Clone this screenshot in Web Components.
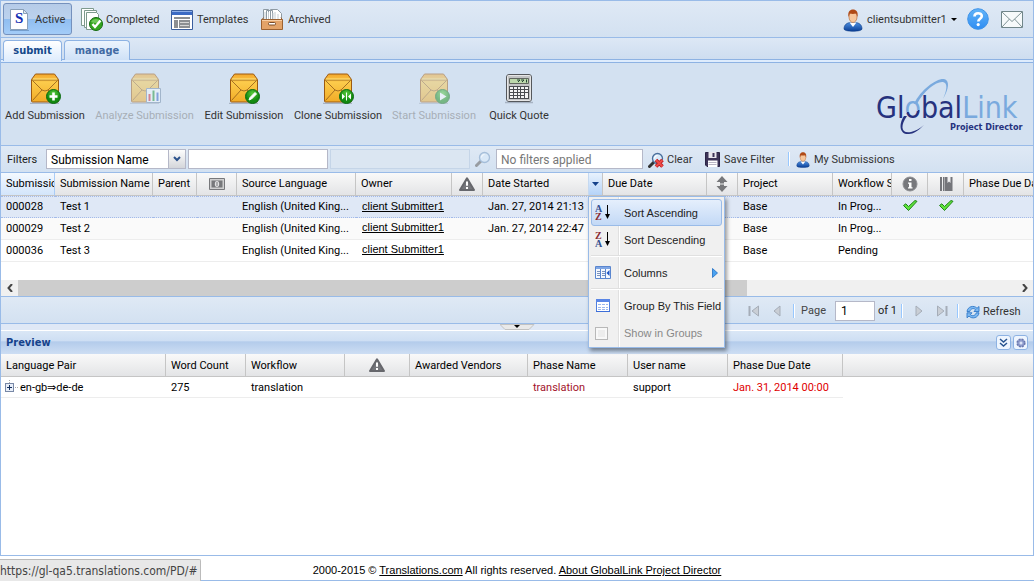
<!DOCTYPE html>
<html lang="en">
<head>
<meta charset="utf-8">
<meta name="viewport" content="width=device-width, initial-scale=1">
<title>GlobalLink Project Director</title>
<style>
:root{
  --ui:Roboto,Tahoma,sans-serif;
  --bold:"DejaVu Sans Condensed",Tahoma,sans-serif;
  --alt:"Liberation Sans",Arial,sans-serif;
  --line:#99bbe8;
}
*{box-sizing:border-box}
body{margin:0;background:#fff;font:11px/14px var(--ui);color:#000}
</style>
</head>
<body>
<pd-app></pd-app>
<script>
const BASE = '*{box-sizing:border-box}button,input,select{font:inherit;color:inherit;margin:0}button{cursor:pointer;background:none;border:0;padding:0}';

const envelope = `<path d="M1 31.500h29" stroke="#8b95a5" stroke-width="1.500" opacity=".6"/><path d="M2.500 7.500 6.500 2h19l4 5.500V29a1 1 0 0 1-1 1h-25a1 1 0 0 1-1-1z" fill="url(#env)" stroke="#9c5a12"/><path d="M3 8h26M3.500 8.500 13 18l3 1 3-1 9.500-9.500M3.500 28.500 13 18M28.500 28.500 19 18" fill="none" stroke="#8f5a1a" stroke-width=".8"/><path d="M4 7h24" stroke="#ffe37c"/>`;
const envDefs = `<defs><linearGradient id="env" x2="0" y2="1"><stop offset="0" stop-color="#f3a72c"/><stop offset=".3" stop-color="#fccb4b"/><stop offset="1" stop-color="#f2ab26"/></linearGradient><radialGradient id="grn" cy=".3"><stop offset="0" stop-color="#5ccb3d"/><stop offset="1" stop-color="#128a10"/></radialGradient></defs>`;
const ball = `<circle cx="24.500" cy="24.500" r="7" fill="url(#grn)" stroke="#0d6b12"/>`;
const person = `<defs><linearGradient id="p" x2="0" y2="1"><stop offset="0" stop-color="#4d8fe0"/><stop offset="1" stop-color="#0b3f96"/></linearGradient></defs><path d="M1 20c0-4.500 3-6 6-6.500h6c3 .5 6 2 6 6.500 0 3-18 3-18 0z" fill="url(#p)" stroke="#0a3a86" stroke-width=".6"/><path d="M6.500 13.500 10 18l3.500-4.500z" fill="#fff"/><ellipse cx="10" cy="8" rx="4" ry="5.500" fill="#f7c79c" stroke="#b4622c" stroke-width=".6"/><path d="M5.500 8C4.500 2.500 7 .5 10 .5s5.500 2 4.500 7.500c-.8-2-1-3-1.500-3.500-2 .5-4.500.5-6 0-.5.5-1 2-1.500 3.500z" fill="#b04a16"/>`;
const lens = `<path d="M1.500 14.500 6 10" stroke="#777" stroke-width="3" stroke-linecap="round"/><circle cx="9.500" cy="6.500" r="5" fill="#d9eafa" stroke="#8aa9cc" stroke-width="1.300"/><path d="M6.500 6.500a3 3 0 0 1 3-3" stroke="#fff" stroke-width="1.200" fill="none"/>`;
const ICONS = {
  active:[24,24,`<path d="M3 22.500h19" stroke="#4d74a3" opacity=".5"/><path d="M3.500 1.500h13l4 4v16h-17z" fill="#fff" stroke="#8aa0b8"/><path d="M16.500 1.500v4h4z" fill="#dfe8f2" stroke="#8aa0b8"/><text x="8" y="15" font-family="Liberation Serif,serif" font-weight="700" font-size="15" fill="#1430b4">S</text>`],
  completed:[24,24,`<g fill="#fff" stroke="#7e9a8e"><path d="M1.500.5h12v17h-12z"/><path d="M4.500 2.500h12v17h-12z"/><path d="M6.500 4.500h10l2 2v15h-12z"/></g><circle cx="16" cy="16" r="6.500" fill="#33a51e" stroke="#146a10"/><path d="M11 14a5.500 5 0 0 1 10 0q-5 2-10 0" fill="#86d66f" opacity=".7"/><path d="m12.500 16 2.500 3 5.500-6.500" fill="none" stroke="#fff" stroke-width="2.400"/>`],
  templates:[24,24,`<path d="M1.500 2.500h21v19h-21z" fill="#fff" stroke="#3b5f9e"/><path d="M2 3h20v4H2z" fill="#3c6bc4"/><path d="M2 3.500h20" stroke="#8fb0e8"/><path d="M4 9h16v2H4zM4 12h4v8H4zM9 12h11v8H9z" fill="#8c8f93"/><path d="M10 14.500h9M10 17.500h9" stroke="#d6d6d6"/>`],
  archived:[24,24,`<path d="M3.500 13V1.500h5V13M6.500 13V2.500h6V13M10.500 13V1.500h7l4 4V13" fill="#fff" stroke="#8e9aa3"/><path d="M5 4v8M8.500 4v8M13 5v7M15 4v8M18 6v6" stroke="#c4ccd2"/><path d="m1.500 12.500 2-3M22.500 12.500l-1.500-3" stroke="#9c6231"/><path d="M1.500 11.500h21v10h-21z" fill="#e3a368" stroke="#9c6231"/><path d="M2 12.500h20" stroke="#f7cda2"/><rect x="8.500" y="14.500" width="7" height="2.500" rx="1" fill="#fff" stroke="#7a4c27"/>`],
  person:[20,23,person],
  help:[22,22,`<defs><linearGradient id="h" x2="0" y2="1"><stop offset="0" stop-color="#62b4f8"/><stop offset="1" stop-color="#2f8df2"/></linearGradient></defs><circle cx="11" cy="11" r="10.300" fill="url(#h)" stroke="#3f93e8"/><path d="M7.500 8.500c0-4.500 7.300-4.200 7.300-.4 0 2.700-3.500 2.600-3.500 5.400" fill="none" stroke="#fff" stroke-width="2.600"/><circle cx="11.200" cy="16.600" r="1.600" fill="#fff"/>`],
  mail:[22,17,`<path d="M.5.500h21v16H.5z" fill="#f6fafb" stroke="#70868a"/><path d="m1 1 10 9.500L21 1M1 16l7.500-8M21 16l-7.500-8" fill="none" stroke="#7f9396"/>`],
  add:[32,32,envDefs+envelope+ball+`<path d="M24.500 20.500v8M20.500 24.500h8" stroke="#fff" stroke-width="2.600"/>`],
  analyze:[32,32,envDefs+envelope+`<path d="M17.500 16.500h14v14h-14z" fill="#f5faff" stroke="#6f87a3"/><path d="M20.500 22v7" stroke="#d21f2c" stroke-width="2"/><path d="M24.500 18.500V29" stroke="#17912c" stroke-width="2"/><path d="M28.500 20.500V29" stroke="#2c5ec4" stroke-width="2"/>`],
  edit:[32,32,envDefs+envelope+ball+`<path d="m21 28 1-2.500 5-5 1.500 1.500-5 5z" fill="#fff" stroke="#fff"/>`],
  clone:[32,32,envDefs+envelope+ball+`<path d="M20 21.500v6l3-3zM29 21.500v6l-3-3z" fill="#fff"/><path d="M24.500 20.500v8" stroke="#fff" stroke-width="1"/>`],
  start:[32,32,envDefs+envelope+ball+`<path d="m22 20.500 6.500 4-6.500 4z" fill="#fff"/>`],
  calc:[32,32,`<path d="M2 30.500h28" stroke="#8b95a5" stroke-width="1.500" opacity=".6"/><rect x="3.500" y="2.500" width="25" height="27" rx="2.500" fill="#c3c4c5" stroke="#55585c"/><rect x="4.500" y="3.500" width="23" height="25" rx="1" fill="none" stroke="#e6e6e6"/><path d="M6.500 6.500h19v5h-19z" fill="#bcd8ab" stroke="#61665f"/><path d="M14 8h3l-2 2M18 8h3l-2 2M23.500 7.500v3" fill="none" stroke="#243"/><path d="M6 14h20v13H6z" fill="#4a4c50"/><g fill="#f4f4f4"><path d="M7 15h3v2H7zM11 15h3v2h-3zM15 15h2v2h-2zM18 15h3v2h-3zM22 15h3v2h-3zM7 18h3v2H7zM11 18h3v2h-3zM15 18h2v2h-2zM18 18h3v2h-3zM22 18h3v2h-3zM7 21h3v2H7zM11 21h3v2h-3zM15 21h2v2h-2zM18 21h3v2h-3zM22 21h3v5h-3zM7 24h3v2H7zM11 24h3v2h-3zM15 24h2v2h-2zM18 24h3v2h-3z"/></g>`],
  lens:[16,16,`<g opacity=".65">${lens}</g>`],
  clear:[16,16,lens.replace('#777','#333').replace('#8aa9cc','#4a6f9c')+`<path d="m8 8 6.500 6.500m0-6.500L8 14.500" stroke="#b81c1f" stroke-width="3.600"/><path d="m8 8 6.500 6.500m0-6.500L8 14.500" stroke="#f04a48" stroke-width="1.800"/>`],
  save:[16,16,`<path d="M.5.500h14v14H2L.5 13z" fill="#3c3357" stroke="#2b2446"/><path d="M3.500 0h8v6h-8z" fill="#e8e6ee"/><path d="M8.500 1v4" stroke="#3c3357" stroke-width="2"/><path d="M3 8.500h9.500V15H3z" fill="#fff"/><path d="M3.500 10.500h8M3.500 12.500h8" stroke="#b9b6c4"/>`],
  money:[16,12,`<path d="M.5.500h15v11H.5z" fill="#cfcfd0" stroke="#77787b"/><path d="M2.500 2.500h11v7h-11z" fill="#77787b"/><ellipse cx="8" cy="6" rx="2.200" ry="3" fill="#e2e2e3"/><path d="M8 4v4" stroke="#77787b"/>`],
  warn:[16,14,`<path d="M8 1.300 15 13H1z" fill="#75767b" stroke="#66676c" stroke-width="2" stroke-linejoin="round"/><path d="M8 4.500v4.300" stroke="#fff" stroke-width="2"/><path d="M8 10v2" stroke="#fff" stroke-width="2"/>`],
  updown:[12,16,`<path d="M6 0 11.500 6H8v1.500H4V6H.5zM6 16l5.500-6H8V8.500H4V10H.5z" fill="#77787b"/>`],
  info:[16,16,`<circle cx="8" cy="8" r="7" fill="#77787c" stroke="#8d8e92"/><path d="M7 3h2.500v2H7zM6 6.500h3.500v4.800h1v1.200H6v-1.200h1V7.700H6z" fill="#fff"/>`],
  book:[14,16,`<path d="M1 1h2v14H1zM4 1h9.500v14H4z" fill="#74757a"/><path d="M5.500 1v14" stroke="#a9aaad"/><path d="M8.500 1h3v6L10 5.500 8.500 7z" fill="#f0f0f1"/>`],
  check:[16,16,`<path d="m1.500 6.500 2.300-1.700 2.700 2.700L13 1.500l2 .8-8.500 9.200z" fill="#5fe23c" stroke="#1e8416" stroke-linejoin="round"/>`],
  down:[7,5,`<path d="M0 0h7L3.500 4z" fill="#15428b"/>`],
  caret:[6,4,`<path d="M0 0h6L3 3z" fill="#000"/>`],
  chevron:[8,6,`<path d="M1 1 4 4l3-3" fill="none" stroke="#2c528c" stroke-width="2"/>`],
  az:[16,20,`<g font-family="Liberation Serif,serif" font-weight="700" font-size="10"><text x="0" y="9" fill="#35508f">A</text><text x="0" y="17" fill="#8a2c33">Z</text></g><path d="M12.500 2v13" stroke="#000"/><path d="M10 11h5l-2.500 5z"/>`],
  za:[16,20,`<g font-family="Liberation Serif,serif" font-weight="700" font-size="10"><text x="0" y="9" fill="#8a2c33">Z</text><text x="0" y="17" fill="#35508f">A</text></g><path d="M12.500 2v13" stroke="#000"/><path d="M10 11h5l-2.500 5z"/>`],
  columns:[16,16,`<path d="M.5 1.500h15v12H.5z" fill="#f4f8ff" stroke="#5a86cf"/><path d="M1 2h14v2H1z" fill="#7fa6e4"/><path d="M5.500 4v9M10.500 4v9" stroke="#5a86cf"/><path d="M2 6.500h3M2 8.500h3M2 10.500h3M7 6.500h3M7 8.500h3M7 10.500h3" stroke="#7d93bb"/><path d="M14.500 5v6l-3-3z" fill="#1d55c4"/>`],
  group:[16,16,`<path d="M1.500 1.500h13v12h-13z" fill="#fff" stroke="#4f7fe0"/><path d="M1 1h14v3H1z" fill="#5a86e6"/><path d="M3 6.500h10M3 9.500h10M3 11.500h10" stroke="#9bb7ee" stroke-dasharray="3 1"/><path d="M1 13.500h14" stroke="#3d6ed8"/>`],
  right:[6,10,`<path d="m.5.500 5 4.500-5 4.500z" fill="#4aa2f0" stroke="#1f6fc4" stroke-width=".8"/>`],
  first:[12,12,`<path d="M1.500 1v10" stroke="#a5adb8" stroke-width="2"/><path d="M10.500 1v10L4 6z" fill="#c9ced5" stroke="#a5adb8"/>`],
  prev:[8,12,`<path d="M7 1v10L1 6z" fill="#c9ced5" stroke="#a5adb8"/>`],
  next:[8,12,`<path d="M1 1v10l6-5z" fill="#c9ced5" stroke="#a5adb8"/>`],
  last:[12,12,`<path d="M10.500 1v10" stroke="#a5adb8" stroke-width="2"/><path d="M1.500 1v10L8 6z" fill="#c9ced5" stroke="#a5adb8"/>`],
  refresh:[16,16,`<path d="M2 7.500c.5-5 7-6.800 10-3.200L14 2.500v5H9l1.700-1.800C8.500 3.500 5.500 4.800 4.800 7.500z" fill="#7db9f2" stroke="#2f78c8" stroke-width=".9"/><path d="M14 8.800c-.5 5-7 6.800-10 3.200L2 13.800v-5h5l-1.700 1.800c2.200 2.200 5.200.9 5.900-1.800z" fill="#7db9f2" stroke="#2f78c8" stroke-width=".9"/>`],
  plus:[14,18,`<path d="M4.500 1v4M10 8.500h3" stroke="#aaa" stroke-dasharray="1 1"/><rect x=".5" y="4.500" width="8" height="8" fill="#e8eef8" stroke="#7888a6"/><path d="M2 8.500h5M4.500 6v5" stroke="#14305e"/>`],
  dbl:[9,9,`<path d="m1 1 3.500 3L8 1M1 5l3.500 3L8 5" fill="none" stroke="#27538f" stroke-width="1.500"/>`],
  gear:[10,10,`<circle cx="5" cy="5" r="3.800" fill="#8f9ccc" stroke="#6876ad" stroke-width="1.600" stroke-dasharray="2 1"/><circle cx="5" cy="5" r="1.500" fill="#dde4f6"/>`],
  left:[6,8,`<path d="M5 0 1.500 4 5 8" fill="none" stroke="#444" stroke-width="2"/>`],
  rightc:[6,8,`<path d="m1 0 3.500 4L1 8" fill="none" stroke="#444" stroke-width="2"/>`],
  logo:[160,60,`<defs><linearGradient id="o" x1="0" y1="0" x2=".8" y2="1"><stop offset=".5" stop-color="#7aaade"/><stop offset=".5" stop-color="#26327e"/></linearGradient></defs><path d="M43 28C50 13 66 2 73 3c6 1 5 10-1 20 4-9 5-16 0-17-6-1-19 8-26 22z" fill="#7aaade"/><path d="M36 40c-7 10-6 18 4 16 4-1 8-3 13-7-6 6-11 9-15 9-9 1-11-9-5-18z" fill="#26327e"/><g font-family="DejaVu Sans Condensed,sans-serif"><text x="5" y="42" font-size="30" fill="#26327e">Gl<tspan fill="url(#o)">o</tspan>bal<tspan fill="#7aaade">Link</tspan></text><text x="79" y="54" font-size="9" font-weight="700" fill="#26327e">Project Director</text></g>`]
};

function define(name, css, html, extra){
  const t = document.createElement('template');
  t.innerHTML = `<style>${BASE}${css}</style>${html}`;
  customElements.define(name, class extends HTMLElement{
    connectedCallback(){
      if(this.shadowRoot) return;
      this.attachShadow({mode:'open'}).append(t.content.cloneNode(true));
      if(extra) extra(this, this.shadowRoot);
    }
  });
}

define('pd-icon', ':host{display:inline-block;flex:none;line-height:0}svg{display:block}', '', (el, root) => {
  const [w,h,body] = ICONS[el.getAttribute('name')];
  const W = el.getAttribute('w') || w, H = el.getAttribute('h') || h;
  root.innerHTML += `<svg width="${W}" height="${H}" viewBox="0 0 ${w} ${h}" aria-hidden="true">${body}</svg>`;
});

/* Horizontal button: icon and caption side by side */
define('pd-button', `
  :host{display:block;flex:none}
  button{display:flex;align-items:center;gap:var(--gap,4px);padding-top:2px;color:#333;white-space:nowrap;width:100%;height:100%}
  :host([pressed]) button{border:1px solid #7591bd;border-radius:3px;background:linear-gradient(#b5cbe8 0,#bcd2ee 50%,#8fbdf0 50%,#a3ccf8 100%);padding:2px 3px 0}`,
  '<button type="button"><slot name="icon"></slot><slot></slot><slot name="end"></slot></button>');

/* Tall button: icon over caption */
define('pd-tool', `
  :host{display:block;flex:none}
  button{display:flex;flex-direction:column;align-items:center;gap:5px;color:#333;white-space:nowrap;width:100%}
  button:disabled{opacity:.48;color:#777}`,
  '<button type="button"><slot></slot></button>', (el, root) => {
    const ic = document.createElement('pd-icon');
    ic.setAttribute('name', el.getAttribute('icon'));
    const b = root.querySelector('button');
    b.prepend(ic);
    b.disabled = el.hasAttribute('disabled');
  });
define('pd-sep', ':host{display:block;flex:none;width:2px;height:14px;border-left:1px solid #98c8ff;border-right:1px solid #fff}', '');

define('pd-header', `
  :host{display:flex;align-items:center;height:37px;padding:2px 10px 2px 2px;background:linear-gradient(#dfe9f5,#d3e1f1);border-bottom:1px solid var(--line)}
  nav{display:flex;height:32px}
  .sp{flex:1}
  nav pd-button{margin-right:8px}
  .a{width:69px;--gap:4px}.b{width:82px;--gap:2px}.c{width:82px;--gap:3px}.d{width:76px}
  .u{width:111px;margin-right:13px}
  button{display:grid}
  .h{margin-right:12px}`, `
  <nav aria-label="Views">
    <pd-button class="a" pressed><pd-icon slot="icon" name="active"></pd-icon>Active</pd-button>
    <pd-button class="b"><pd-icon slot="icon" name="completed"></pd-icon>Completed</pd-button>
    <pd-button class="c"><pd-icon slot="icon" name="templates"></pd-icon>Templates</pd-button>
    <pd-button class="d"><pd-icon slot="icon" name="archived"></pd-icon>Archived</pd-button>
  </nav><span class="sp"></span>
  <pd-button class="u"><pd-icon slot="icon" name="person"></pd-icon>clientsubmitter1<pd-icon slot="end" name="caret"></pd-icon></pd-button>
  <button class="h" type="button" aria-label="Help"><pd-icon name="help"></pd-icon></button>
  <button type="button" aria-label="Messages"><pd-icon name="mail"></pd-icon></button>`);

define('pd-tabs', `
  :host{display:block;background:linear-gradient(#dde8f5,#cbdbef)}
  div{display:flex;gap:2px;padding:2px 2px 0;border-bottom:1px solid #8db2e3;height:22px}
  button{height:20px;border:1px solid #8db2e3;border-bottom:0;border-radius:4px 4px 0 0;font:700 11px/14px var(--bold);color:#416aa3;background:linear-gradient(#ecf4fd,#cfe1f7)}
  button[aria-selected=true]{height:21px;color:#15498b;background:linear-gradient(#fff,#deecfd)}
  .s{width:59px}.m{width:66px}
  p{margin:0;height:3px;background:#deecfd;border-bottom:1px solid #8db2e3}`, `
  <div role="tablist"><button class="s" role="tab" aria-selected="true">submit</button><button class="m" role="tab" aria-selected="false">manage</button></div><p></p>`);

define('pd-actions', `
  :host{display:flex;justify-content:space-between;align-items:flex-start;height:83px;padding:9px 2px 0 7px;background:#d3e1f1;border-bottom:1px solid var(--line)}
  div{display:flex;gap:16px}
  .a{width:74px}.b{width:93px}.c{width:82px}.d{width:78px}.e{width:60px}
  .logo{margin-top:4px}`, `
  <div>
    <pd-tool class="a" icon="add">Add Submission</pd-tool>
    <pd-tool class="b" icon="analyze" disabled>Analyze Submission</pd-tool>
    <pd-tool class="a" icon="edit">Edit Submission</pd-tool>
    <pd-tool class="c" icon="clone">Clone Submission</pd-tool>
    <pd-tool class="d" icon="start" disabled>Start Submission</pd-tool>
    <pd-tool class="e" icon="calc">Quick Quote</pd-tool>
  </div>
  <pd-icon class="logo" name="logo"></pd-icon>`);

define('pd-filters', `
  :host{display:flex;align-items:center;height:27px;padding:0 6px;background:linear-gradient(#dfe9f5,#d3e1f1);border-bottom:1px solid var(--line);color:#333}
  label{width:39px;padding-top:2px;color:#222}
  input,.combo{height:20px;border:1px solid #b5b8c8;background:#fff;font-size:12px;width:140px;padding:2px 4px 0;flex:none;margin-right:2px}
  .combo{position:relative;padding:0;color:#000}
  select{appearance:none;border:0;background:none;width:100%;height:18px;padding:2px 20px 0 4px;outline:0}
  .combo span{position:absolute;right:0;top:0;width:17px;height:18px;display:grid;place-items:center;border-left:1px solid #b5b8c8;background:linear-gradient(#fdfdfd,#d4d6da);pointer-events:none}
  input:disabled{background:#dbe6f2;border-color:#c5d5e8}
  .q{width:147px;margin:0 5px;color:#777}
  .q::placeholder{color:#777;opacity:1}
  .l{margin-left:3px}
  .c{width:57px;--gap:3px}.s{width:83px;--gap:3px}.m{width:100px}
  pd-sep{margin-right:6px}`, `
  <label for="f">Filters</label>
  <div class="combo"><select id="f"><option>Submission Name</option></select><span><pd-icon name="chevron"></pd-icon></span></div>
  <input aria-label="Filter value"><input aria-label="Second filter value" disabled>
  <pd-icon class="l" name="lens"></pd-icon>
  <input class="q" aria-label="Applied filters" placeholder="No filters applied">
  <pd-button class="c"><pd-icon slot="icon" name="clear"></pd-icon>Clear</pd-button>
  <pd-button class="s"><pd-icon slot="icon" name="save"></pd-icon>Save Filter</pd-button>
  <pd-sep></pd-sep>
  <pd-button class="m"><pd-icon slot="icon" name="person" w="14" h="16"></pd-icon>My Submissions</pd-button>`);

const TABLE = `
  table{border-collapse:separate;border-spacing:0;table-layout:fixed;width:100%}
  th,td{padding:0 5px;text-align:left;font-weight:400;overflow:hidden;white-space:nowrap;height:22px}
  th{position:relative;height:23px;background:linear-gradient(#f9f9f9,#e3e4e6);border-right:1px solid #c5c5c5;border-bottom:1px solid #c5c5c5;padding-right:0}
  th.i,td.i{text-align:center;padding:0}
  th pd-icon,td pd-icon{vertical-align:middle}
  td{border-bottom:1px solid #ededed}
  a{color:#000;font-family:var(--alt)}`;
const cols = ws => '<colgroup>' + ws.map(w => w ? `<col style="width:${w}px">` : '<col>').join('') + '</colgroup>';
const ic = n => `<pd-icon name="${n}"></pd-icon>`;
const owner = '<a href="#">client Submitter1</a>';
const row = (id, n, date, st, ok) => `<tr><td>${id}</td><td>Test ${n}</td><td></td><td></td><td>English (United King...</td><td class="o">${owner}</td><td></td><td class="d">${date}</td><td></td><td></td><td>Base</td><td>${st}</td><td class="i">${ok}</td><td class="i">${ok}</td><td></td></tr>`;

define('pd-submissions', TABLE + `
  :host{display:block;position:relative}
  .view{height:107px;overflow:hidden}
  th:first-child{background:linear-gradient(#f4f9ff,#d3e5fb);border-right-color:#aaccf6}
  th:last-child{border-right:0}
  .d{padding-right:0}
  .o{padding:0 0 2px 6px}
  th button{position:absolute;right:0;top:0;width:14px;height:22px;background:linear-gradient(#e8f2fd,#b5d3f8);border-left:1px solid #c5d9f1;display:grid;place-items:center}
  tbody tr:first-child td{background:#dfe8f6;border-top:1px dotted #a3bae9;border-bottom:1px dotted #a3bae9}
  tbody tr:nth-child(2) td{background:#fafafa}
  .bar{display:flex;height:16px;background:#f0f0f0;border-bottom:0}
  .bar button{width:17px;display:grid;place-items:center}
  .track{flex:1}.track i{display:block;height:16px;width:73%;background:#cdcdcd}
  pd-menu{position:absolute;left:587px;top:23px;z-index:2}`, `
  <div class="view"><table>${cols([54,98,44,40,119,96,31,120,104,31,95,59,36,36,0])}
  <thead><tr><th>Submission</th><th>Submission Name</th><th>Parent</th><th class="i">${ic('money')}</th><th>Source Language</th><th>Owner</th><th class="i">${ic('warn')}</th><th>Date Started<button type="button" aria-label="Column menu">${ic('down')}</button></th><th>Due Date</th><th class="i">${ic('updown')}</th><th>Project</th><th>Workflow S</th><th class="i">${ic('info')}</th><th class="i">${ic('book')}</th><th>Phase Due Da</th></tr></thead>
  <tbody>${row('000028',1,'Jan. 27, 2014 21:13','In Prog...',ic('check'))}${row('000029',2,'Jan. 27, 2014 22:47','In Prog...','')}${row('000036',3,'','Pending','')}</tbody></table></div>
  <div class="bar"><button type="button" aria-label="Scroll left">${ic('left')}</button><div class="track"><i></i></div><button type="button" aria-label="Scroll right">${ic('rightc')}</button></div>
  <pd-menu>
    <pd-item icon="az" active>Sort Ascending</pd-item>
    <pd-item icon="za">Sort Descending</pd-item>
    <pd-rule></pd-rule>
    <pd-item icon="columns" sub>Columns</pd-item>
    <pd-rule></pd-rule>
    <pd-item icon="group">Group By This Field</pd-item>
    <pd-item check>Show in Groups</pd-item>
  </pd-menu>`);

define('pd-menu', `
  :host{display:block;width:137px;padding:2px 2px 1px;border:1px solid var(--line);background:linear-gradient(90deg,#f0f0f0 29px,#e0e0e0 29px,#e0e0e0 30px,#fff 30px,#fff 31px,#f0f0f0 31px);box-shadow:2px 3px 4px rgba(0,0,0,.4);font-family:var(--alt)}`, '<slot></slot>');
define('pd-rule', ':host{display:block;height:2px;margin:2px 0;background:#e0e0e0;border-bottom:1px solid #fff}', '');
define('pd-item', `
  :host{display:block;height:27px;color:#222}
  button,label{display:flex;align-items:center;width:100%;height:27px;padding:1px 3px 0;border:1px solid transparent;border-radius:3px;white-space:nowrap;text-align:left}
  .pic{width:29px;flex:none;display:flex;align-items:center;height:20px}
  .t{flex:1}
  :host([active]) button{border-color:#99bbe8;background:linear-gradient(#e5effc,#c3d9f6)}
  label{color:#888}
  input{appearance:none;width:13px;height:13px;margin:0;border:1px solid #b8b8b8;background:#ededed;box-shadow:inset 0 0 0 2px #f8f8f8}`, '', (el, root) => {
    root.innerHTML += el.hasAttribute('check')
      ? '<label><span class="pic"><input type="checkbox" disabled></span><slot></slot></label>'
      : `<button type="button"><span class="pic">${ic(el.getAttribute('icon'))}</span><span class="t"><slot></slot></span>${el.hasAttribute('sub') ? ic('right') : ''}</button>`;
  });

define('pd-pager', `
  :host{display:flex;align-items:center;justify-content:flex-end;height:28px;padding:2px 9px 0 0;border:1px solid var(--line);border-width:1px 0;background:linear-gradient(#dfe9f5,#d3e1f1);color:#333}
  button{display:grid}
  .n{margin-left:13px}
  .s{margin-left:12px}
  .x{margin-left:9px}
  label{display:flex;align-items:center;gap:9px;margin-left:6px;color:#444}
  input{width:40px;height:20px;border:1px solid #b5b8c8;background:#fff;padding:0 5px;color:#000;font-size:12px}
  output{margin:0 4px 0 3px;color:#222}
  .r{width:59px;margin-left:6px;--gap:2px}`, `
  <button type="button" aria-label="First page">${ic('first')}</button>
  <button class="n" type="button" aria-label="Previous page">${ic('prev')}</button>
  <pd-sep class="s"></pd-sep>
  <label>Page <input value="1"></label><output>of 1</output>
  <pd-sep></pd-sep>
  <button class="s" type="button" aria-label="Next page">${ic('next')}</button>
  <button class="n" type="button" aria-label="Last page">${ic('last')}</button>
  <pd-sep class="x"></pd-sep>
  <pd-button class="r"><pd-icon slot="icon" name="refresh"></pd-icon>Refresh</pd-button>`);

define('pd-splitter', `
  :host{display:flex;justify-content:center;height:6px;background:#dfe8f6}
  svg{display:block}`, '<svg width="35" height="6" aria-hidden="true"><path d="M0 .5h34l-5 5H5z" fill="#e9e9e9" stroke="#c2c2c2"/><path d="M14 1h6l-3 3z"/></svg>');

define('pd-preview', TABLE + `
  :host{display:flex;flex-direction:column;flex:1;border-bottom:1px solid var(--line)}
  header{display:flex;align-items:center;gap:2px;height:24px;padding:0 5px;border-top:1px solid #fff;background:linear-gradient(#dae7f6 0,#cddef3 45%,#b3cbeb 46%,#cddef3 100%)}
  h2{margin:0;flex:1;font:700 11px/14px var(--bold);color:#15428b}
  header button{width:15px;height:15px;border:1px solid #8db2e3;border-radius:3px;background:#eef5fe;display:grid;place-items:center}
  table{width:842px}
  th,td{padding-top:2px}
  .wrap{background:linear-gradient(#f9f9f9,#e3e4e6) 0 0/100% 22px no-repeat,linear-gradient(#c5c5c5,#c5c5c5) 0 22px/100% 1px no-repeat}
  td{height:21px}
  td:first-child{padding-left:4px}
  td:first-child pd-icon{margin-right:1px}
  .p{color:#a3142c}.r{color:#e00000}`, `
  <header><h2>Preview</h2><button type="button" aria-label="Collapse">${ic('dbl')}</button><button type="button" aria-label="Settings">${ic('gear')}</button></header>
  <div class="wrap"><table>${cols([165,80,99,65,118,100,100,115])}
  <thead><tr><th>Language Pair</th><th>Word Count</th><th>Workflow</th><th class="i">${ic('warn')}</th><th>Awarded Vendors</th><th>Phase Name</th><th>User name</th><th>Phase Due Date</th></tr></thead>
  <tbody><tr><td>${ic('plus')}en-gb⇒de-de</td><td>275</td><td>translation</td><td></td><td></td><td class="p">translation</td><td>support</td><td class="r">Jan. 31, 2014 00:00</td></tr></tbody></table></div>`);

define('pd-footer', `
  :host{display:flex;justify-content:center;align-items:center;height:25px;padding-top:4px;border-bottom:1px solid var(--line);background:#fff;font-family:var(--alt)}
  p{margin:0;white-space:nowrap}
  a{color:#000}`, '<p>2000-2015 © <a href="#">Translations.com</a> All rights reserved. <a href="#">About GlobalLink Project Director</a></p>');

define('pd-status', `
  :host{position:fixed;left:0;bottom:0;height:22px;width:201px;background:#e8e8e8;border:1px solid #bbb;border-width:1px 1px 0 0;border-top-right-radius:2px;color:#444;font:12px/22px "DejaVu Sans Condensed",sans-serif;white-space:nowrap}`, '<slot></slot>');

define('pd-app', `
  :host{display:flex;flex-direction:column;min-height:100vh;border-top:1px solid var(--line)}
  main{flex:1;display:flex;flex-direction:column;border:1px solid var(--line);border-width:0 1px}`, `
  <main>
    <pd-header></pd-header><pd-tabs></pd-tabs><pd-actions></pd-actions><pd-filters></pd-filters>
    <pd-submissions></pd-submissions><pd-pager></pd-pager><pd-splitter></pd-splitter><pd-preview></pd-preview>
  </main>
  <pd-footer></pd-footer>
  <pd-status>https://gl-qa5.translations.com/PD/#</pd-status>`);
</script>
</body>
</html>
